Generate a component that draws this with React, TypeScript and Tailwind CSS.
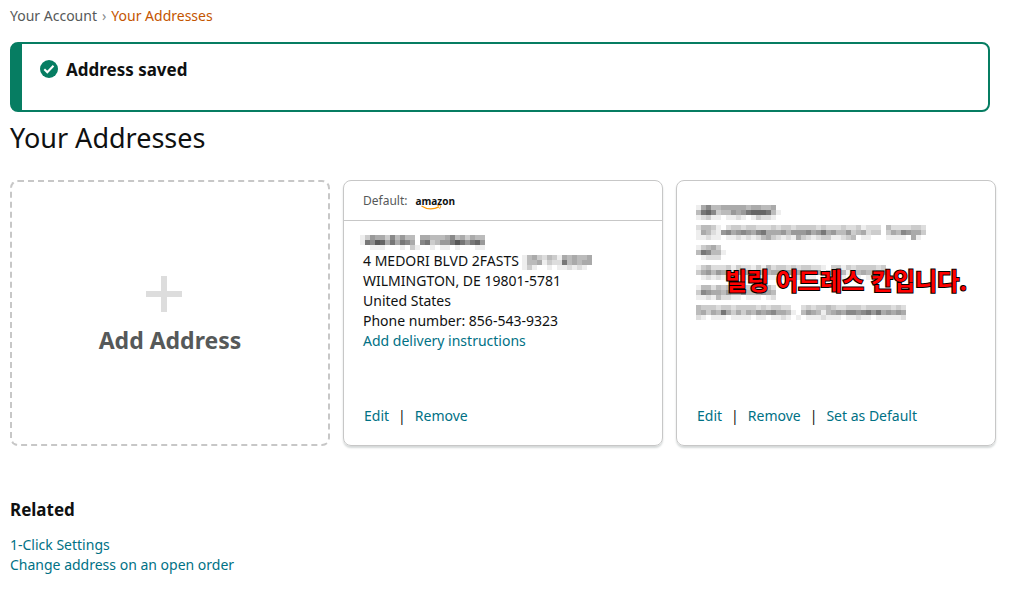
interface MosaicParams {
	label: string;
	rows: string[];
}

interface CardParams {
	children: React.ReactNode;
	header?: React.ReactNode;
	actions: string[];
}

const CELL = 5;

// every hex digit is the grey level of one cell, f is left empty
const Mosaic = ({ label, rows }: MosaicParams): React.JSX.Element => {
	const width = rows[0].length * CELL;
	const height = rows.length * CELL;
	return (
		<svg
			role="img"
			aria-label={label}
			width={width}
			height={height}
			viewBox={`0 0 ${width} ${height}`}
			shapeRendering="crispEdges"
			className="shrink-0"
		>
			{rows.map((row, y) =>
				row.split("").map((digit, x) => (
					<rect
						key={`${x}-${y}`}
						x={x * CELL}
						y={y * CELL}
						width={CELL}
						height={CELL}
						fill={`#${digit.repeat(3)}`}
					/>
				))
			)}
		</svg>
	);
};

const nameRows = [
	"ec9aac8b9bbfaabbba8bacabb",
	"e7856a7a78af87cb997579769",
	"ffeeefffefceffefeefefffee",
];

const unitRows = ["ebacdbceababba", "ebbaecdd7babaa", "eceffefeededef"];

const billingRows = [
	["ea8bbaaaaabaabbaf", "b768cbb9a976667be", "edceefeedefecddef"],
	[
		"dbbcefdccdccdddcdccdccccdcdddcddcedddfbddddccd",
		"eabde98a989a87aaa9b9998a97a9bb9cbadccfcab89aac",
		"eedeefeedededbacdedeacdedcceedcbfeefffeeeefaef",
	],
	["ecbacf", "b78bbe", "fedddf"],
	[
		"ecbdddcecddecebdccdcdccddefccecdccccdc",
		"ca9b9abcaaab9bbaab9aabbaafcabbeababbab",
		"fedededefeedeeeefeeedeeefefeeefeefefee",
	],
	["ebbdbcbcddcdccbd", "c89aab9aa8bba9ab", "eedebddeefeeefed"],
	[
		"bcccdccdccccdcdccddffdcdccbcddcccdcccccdcd",
		"bacab7acacab9a98aabefb9abeba9a8898797a9a9a",
		"defeeefeeeefeefeedefefeeedeeefeedeefeeeeed",
	],
];

const Breadcrumb = (): React.JSX.Element => {
	return (
		<nav aria-label="Breadcrumb" className="flex pt-[6px]">
			<a href="#account" className="text-[#565959]">
				Your Account
			</a>
			<span className="px-[5px] text-[#888c8c]">›</span>
			<span className="text-[#c45500]">Your Addresses</span>
		</nav>
	);
};

const SavedAlert = (): React.JSX.Element => {
	return (
		<div
			role="status"
			className="mt-4 mr-[6px] flex min-h-[70px] items-start rounded-lg border-2 border-l-[12px] border-[#067d62] px-[18px] py-[14px]"
		>
			<svg width="18" height="18" viewBox="0 0 18 18" className="mt-[2px] mr-2">
				<circle cx="9" cy="9" r="9" fill="#067d62" />
				<path d="M4.300 9.300l3 3 6.200-6.500" fill="none" stroke="#fff" strokeWidth="2" />
			</svg>
			<h4 className="text-[17px] leading-6 font-bold">Address saved</h4>
		</div>
	);
};

const AmazonLogo = (): React.JSX.Element => {
	return (
		<span className="relative block font-['Open_Sans',sans-serif] text-[10px] leading-4 font-bold">
			amazon
			<svg width="21" height="5" viewBox="0 0 21 5" className="absolute top-[12px] left-[6px]">
				<path d="M.5 1C6 4.600 12.500 4.600 18 1.900" fill="none" stroke="#f90" strokeWidth="1.200" />
				<path d="M16.200 .7q3-.6 3.400 0t-1 3" fill="none" stroke="#f90" strokeWidth=".9" />
			</svg>
		</span>
	);
};

const Card = ({ children, header, actions }: CardParams): React.JSX.Element => {
	return (
		<section className="flex min-h-[266px] flex-col rounded-lg border border-[#c7c7c7] shadow-[0_2px_2px_#d5d9d9]">
			{header}
			<div className="relative flex-1 px-[19px] pt-[10px]">{children}</div>
			<div className="flex px-5 pb-[19px]">
				{actions.map((action, i) => (
					<span key={action} className="flex">
						{i > 0 && <span className="px-[9px]">|</span>}
						<a href={`#${action}`} className="text-[#007185]">
							{action}
						</a>
					</span>
				))}
			</div>
		</section>
	);
};

const App = (): React.JSX.Element => {
	return (
		<main className="bg-white pr-5 pb-5 pl-[10px] font-['Noto_Sans',sans-serif] text-[14px] leading-5 text-[#0f1111]">
			<Breadcrumb />
			<SavedAlert />
			<h1 className="mt-2 text-[27px] leading-9">Your Addresses</h1>

			<div className="mt-6 grid grid-cols-3 gap-[13px]">
				<a
					href="#add"
					className="flex flex-col items-center justify-center rounded-lg border-2 border-dashed border-[#c7c7c7] pt-[6px] text-[#565959]"
				>
					<svg width="36" height="36" viewBox="0 0 36 36" className="mr-3">
						<path d="M15 0h6v15h15v6H21v15h-6V21H0v-6h15z" fill="#ddd" />
					</svg>
					<h2 className="mt-3 text-[23px] leading-8 font-bold">Add Address</h2>
				</a>

				<Card
					actions={["Edit", "Remove"]}
					header={
						<div className="flex h-10 items-center gap-2 border-b border-[#c7c7c7] px-[19px] text-[12px] text-[#565959]">
							<span>Default:</span>
							<div className="text-[#0f1111]">
								<AmazonLogo />
							</div>
						</div>
					}
				>
					<div className="-ml-[3px] flex h-5 items-end pb-px">
						<Mosaic label="Hidden name" rows={nameRows} />
					</div>
					<div className="flex items-end gap-[3px]">
						<span>4 MEDORI BLVD 2FASTS</span>
						<div className="pb-px">
							<Mosaic label="Hidden unit" rows={unitRows} />
						</div>
					</div>
					<p>WILMINGTON, DE 19801-5781</p>
					<p>United States</p>
					<p>Phone number: 856-543-9323</p>
					<a href="#instructions" className="text-[#007185]">
						Add delivery instructions
					</a>
				</Card>

				<Card actions={["Edit", "Remove", "Set as Default"]}>
					<div className="pt-[10px]">
						{billingRows.map((rows, i) => (
							<div key={i} className="flex h-5 items-end pb-px">
								<Mosaic label="Hidden address line" rows={rows} />
							</div>
						))}
					</div>
					<strong
						lang="ko"
						className="absolute top-[81px] left-12 font-['Noto_Sans_CJK_KR',sans-serif] text-2xl leading-9 font-bold whitespace-nowrap text-[#f00] [-webkit-text-stroke:2px_#000] [paint-order:stroke_fill]"
					>
						빌링 어드레스 칸입니다.
					</strong>
				</Card>
			</div>

			<section className="mt-[52px]">
				<h3 className="text-[17px] leading-6 font-bold">Related</h3>
				<ul className="mt-[13px] text-[#007185]">
					<li>
						<a href="#one-click">1-Click Settings</a>
					</li>
					<li>
						<a href="#open-order">Change address on an open order</a>
					</li>
				</ul>
			</section>
		</main>
	);
};

export default App;
